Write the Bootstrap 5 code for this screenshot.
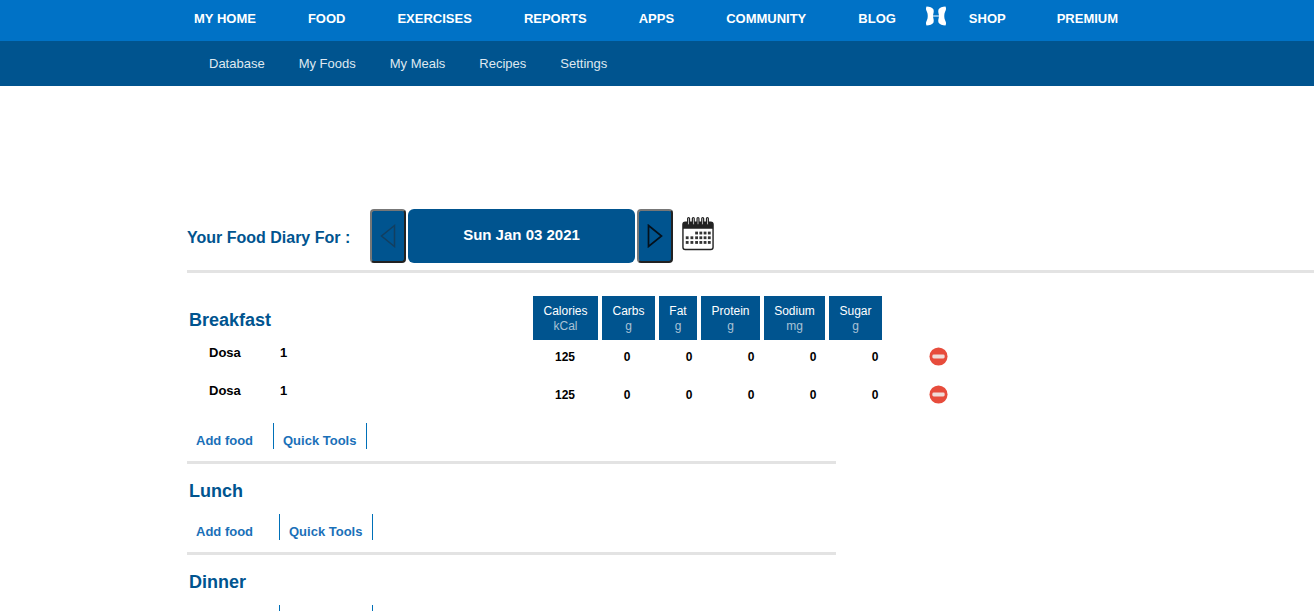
<!DOCTYPE html>
<html lang="en">
<head>
    <meta charset="UTF-8">
    <meta name="viewport" content="width=device-width, initial-scale=1.0">
    <title>Food Diary</title>
    <link href="https://cdn.jsdelivr.net/npm/bootstrap@5.3.0/dist/css/bootstrap.min.css" rel="stylesheet">
    <style>
        html, body { height: 611px; overflow: hidden; }
        body { font-family: "Liberation Sans", Arial, sans-serif; font-size: 13px; color: #000; background: #fff; }
        a { text-decoration: none; }

        .top-bar { background: #0072c6; height: 41px; padding-left: 168px; }
        .top-bar a { color: #fff; font-weight: 700; font-size: 13px; line-height: 38px; padding: 0 26px; white-space: nowrap; }
        .top-bar a.shop-link { padding-left: 0; padding-right: 25px; }
        .ua-logo { width: 22px; height: 20px; margin: 6px 22px 0 29px; flex: none; }
        .sub-bar { background: #00548f; height: 45px; padding-left: 192px; }
        .sub-bar a { color: #dfe8f0; font-size: 13px; line-height: 46px; padding: 0 17px; white-space: nowrap; }

        .page-main { padding-left: 187px; padding-top: 123px; }
        .date-row { height: 54px; }
        .diary-label { color: #00548f; font-size: 16px; font-weight: 700; width: 183px; padding-top: 17px; }
        .date-arrow { width: 36px; height: 54px; background: #00548f; border: 2px outset #777; border-radius: 4px; padding: 0; }
        .date-now { width: 227px; height: 54px; margin: 0 2px; background: #00548f; color: #fff; font-size: 15px; font-weight: 700; border-radius: 6px; line-height: 52px; text-align: center; }
        .cal-icon { width: 32px; height: 35px; margin: 7px 0 0 9px; }
        .top-rule { height: 3px; background: #e3e3e3; margin-top: 7px; }

        .meal-head { height: 44px; margin-top: 23px; }
        .meal-title { color: #00548f; font-size: 18px; font-weight: 700; margin: 0 0 0 2px; line-height: 23px; }
        .meal-head .meal-title { width: 344px; padding-top: 13px; height: 44px; }
        .nutrient-heads { gap: 3px; }
        .nutrient-head { height: 44px; background: #00548f; color: #fff; font-size: 12px; line-height: 15px; padding-top: 8px; text-align: center; }
        .nutrient-head span { display: block; color: #a9c2d6; }
        .w-cal { width: 65px; margin-right: 1px; }
        .w-carb { width: 53px; margin-right: 1px; }
        .w-fat { width: 38px; margin-right: 1px; }
        .w-pro { width: 59px; margin-right: 1px; }
        .w-sod { width: 61px; margin-right: 1px; }
        .w-sug { width: 53px; }

        .food-row { height: 38px; font-weight: 700; font-size: 12px; }
        .food-name { width: 71px; margin-left: 22px; padding-top: 3px; line-height: 20px; font-size: 13px; }
        .food-qty { width: 254px; padding-top: 3px; line-height: 20px; font-size: 13px; }
        .food-val { width: 62px; text-align: center; padding-top: 7px; line-height: 20px; }
        .remove-btn { width: 19px; height: 19px; margin: 7px 0 0 23px; }

        .meal-links { height: 26px; margin-top: 7px; }
        .meal-links a { color: #1a70b8; font-size: 13px; font-weight: 700; line-height: 35px; white-space: nowrap; }
        .meal-links .add-cell { padding-left: 9px; border-right: 1px solid #0070b8; }
        .meal-links .tools-cell { padding: 0 10px 0 9px; border-right: 1px solid #0070b8; }
        .add-short { width: 87px; }
        .add-long { width: 93px; }
        .tools-empty { width: 93px; }
        .meal-rule { width: 649px; height: 3px; background: #e3e3e3; margin-top: 12px; }
        .meal-name-row { padding-top: 16px; height: 43px; }
    </style>
</head>
<body>
    <nav class="top-bar d-flex">
        <a href="#">MY HOME</a>
        <a href="#">FOOD</a>
        <a href="#">EXERCISES</a>
        <a href="#">REPORTS</a>
        <a href="#">APPS</a>
        <a href="#">COMMUNITY</a>
        <a href="#" class="pe-0">BLOG</a>
        <svg class="ua-logo" viewBox="0 0 22 20" aria-hidden="true">
            <path fill="#fff" d="M1.500 .5C4.500 .5 7.500 1.500 8.500 3.500 9.300 6 8 8 8 10 8 12 9.300 14 8.500 16.500 7.500 18.500 4.500 19.500 1.500 19.500 .5 17.500 1 16 2 14 3 12 3 8 2 6 1 4 .5 2.500 1.500 .5z"/>
            <path fill="#fff" d="M20.500 .5C17.500 .5 14.500 1.500 13.500 3.500 12.700 6 14 8 14 10 14 12 12.700 14 13.500 16.500 14.500 18.500 17.500 19.500 20.500 19.500 21.500 17.500 21 16 20 14 19 12 19 8 20 6 21 4 21.500 2.500 20.500 .5z"/>
            <rect x="8" y="9" width="6" height="2" fill="#fff" opacity=".5"/>
        </svg>
        <a href="#" class="shop-link">SHOP</a>
        <a href="#">PREMIUM</a>
    </nav>
    <div class="sub-bar d-flex">
        <a href="#">Database</a>
        <a href="#">My Foods</a>
        <a href="#">My Meals</a>
        <a href="#">Recipes</a>
        <a href="#">Settings</a>
    </div>

    <main class="page-main">
        <div class="date-row d-flex">
            <div class="diary-label">Your Food Diary For :</div>
            <button class="date-arrow d-flex align-items-center justify-content-center" type="button" aria-label="Previous day">
                <svg width="16" height="24" viewBox="0 0 16 24"><path d="M14.500 1.500 1.500 12l13 10.500z" fill="none" stroke="#123f60" stroke-width="1.500"/></svg>
            </button>
            <div class="date-now">Sun Jan 03 2021</div>
            <button class="date-arrow d-flex align-items-center justify-content-center" type="button" aria-label="Next day">
                <svg width="16" height="24" viewBox="0 0 16 24"><path d="M1.500 1.500 14.500 12l-13 10.500z" fill="none" stroke="#04111c" stroke-width="1.700"/></svg>
            </button>
            <svg class="cal-icon" viewBox="0 0 34 36" aria-hidden="true">
                <rect x="1" y="6" width="32" height="29" rx="2.500" fill="#fff" stroke="#222" stroke-width="1.500"/>
                <path d="M1 8.500a2.500 2.500 0 0 1 2.500-2.500h27a2.500 2.500 0 0 1 2.500 2.500V13H1z" fill="#222"/>
                <g stroke="#222" stroke-width="1.300" fill="#fff"><rect x="6" y="1" width="2" height="8" rx="1"/><rect x="11" y="1" width="2" height="8" rx="1"/><rect x="16" y="1" width="2" height="8" rx="1"/><rect x="21" y="1" width="2" height="8" rx="1"/><rect x="26" y="1" width="2" height="8" rx="1"/></g>
                <g fill="#333">
                    <rect x="14" y="16" width="3" height="3"/><rect x="18.500" y="16" width="3" height="3"/><rect x="23" y="16" width="3" height="3"/><rect x="27.500" y="16" width="3" height="3"/>
                    <rect x="4" y="21" width="3" height="3"/><rect x="9" y="21" width="3" height="3"/><rect x="14" y="21" width="3" height="3"/><rect x="18.500" y="21" width="3" height="3"/><rect x="23" y="21" width="3" height="3"/><rect x="27.500" y="21" width="3" height="3"/>
                    <rect x="4" y="26" width="3" height="3"/><rect x="9" y="26" width="3" height="3"/><rect x="14" y="26" width="3" height="3"/><rect x="18.500" y="26" width="3" height="3"/><rect x="23" y="26" width="3" height="3"/><rect x="27.500" y="26" width="3" height="3"/>
                </g>
            </svg>
        </div>
        <div class="top-rule"></div>

        <section>
            <div class="meal-head d-flex">
                <h2 class="meal-title">Breakfast</h2>
                <div class="nutrient-heads d-flex">
                    <div class="nutrient-head w-cal">Calories<span>kCal</span></div>
                    <div class="nutrient-head w-carb">Carbs<span>g</span></div>
                    <div class="nutrient-head w-fat">Fat<span>g</span></div>
                    <div class="nutrient-head w-pro">Protein<span>g</span></div>
                    <div class="nutrient-head w-sod">Sodium<span>mg</span></div>
                    <div class="nutrient-head w-sug">Sugar<span>g</span></div>
                </div>
            </div>
            <div class="food-row d-flex">
                <div class="food-name">Dosa</div><div class="food-qty">1</div>
                <div class="food-val">125</div><div class="food-val">0</div><div class="food-val">0</div><div class="food-val">0</div><div class="food-val">0</div><div class="food-val">0</div>
                <svg class="remove-btn" viewBox="0 0 20 20" aria-hidden="true"><circle cx="10" cy="10" r="9.500" fill="#e74c3c"/><rect x="3.500" y="8" width="13" height="4" rx="1.500" fill="#f0dcd8"/></svg>
            </div>
            <div class="food-row d-flex">
                <div class="food-name">Dosa</div><div class="food-qty">1</div>
                <div class="food-val">125</div><div class="food-val">0</div><div class="food-val">0</div><div class="food-val">0</div><div class="food-val">0</div><div class="food-val">0</div>
                <svg class="remove-btn" viewBox="0 0 20 20" aria-hidden="true"><circle cx="10" cy="10" r="9.500" fill="#e74c3c"/><rect x="3.500" y="8" width="13" height="4" rx="1.500" fill="#f0dcd8"/></svg>
            </div>
            <div class="meal-links d-flex">
                <div class="add-cell add-short"><a href="#">Add food</a></div>
                <div class="tools-cell"><a href="#">Quick Tools</a></div>
            </div>
            <div class="meal-rule"></div>
        </section>

        <section>
            <div class="meal-name-row"><h2 class="meal-title">Lunch</h2></div>
            <div class="meal-links d-flex">
                <div class="add-cell add-long"><a href="#">Add food</a></div>
                <div class="tools-cell"><a href="#">Quick Tools</a></div>
            </div>
            <div class="meal-rule"></div>
        </section>

        <section>
            <div class="meal-name-row"><h2 class="meal-title">Dinner</h2></div>
            <div class="meal-links d-flex">
                <div class="add-cell add-long"></div>
                <div class="tools-cell tools-empty"></div>
            </div>
        </section>
    </main>
</body>
</html>
